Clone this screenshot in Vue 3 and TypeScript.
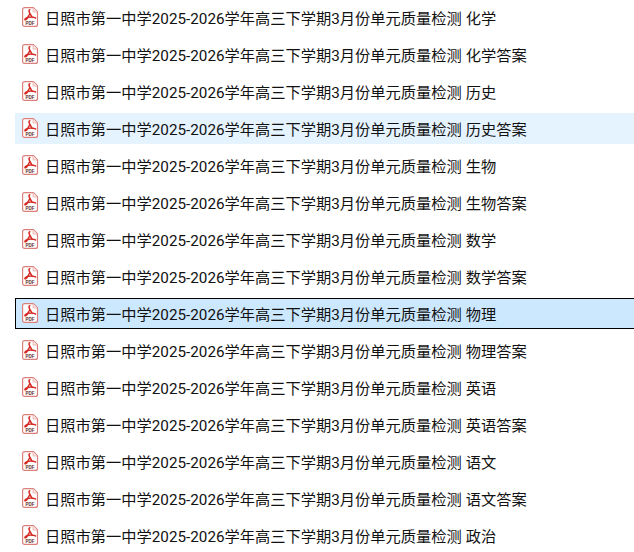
<template>
  <ul class="file-list">
    <li
      v-for="(file, i) in files"
      :key="i"
      class="file-row"
      :class="{ hover: i === 3, selected: i === 8 }"
    >
      <svg class="pdf-icon" width="18" height="20" viewBox="0 0 18 20">
        <path
          d="M2.600 .6h8.700l4.200 4.200v12.600a2 2 0 0 1-2 2H2.600a2 2 0 0 1-2-2V2.600a2 2 0 0 1 2-2z"
          fill="#fff"
          stroke="#dc7f7a"
          stroke-width="1.200"
        />
        <path d="M11.100 .8v4.200h4.200" fill="#fbe9e8" stroke="#e8aaa6" stroke-width=".8" />
        <path
          d="M7.800 2.800c-1.100 0-1 1.600.1 3.700l2.200 3.600c1.300.2 2.900.2 3.500.9M7.900 6.500 5.300 11.200c-1.100 1.400-2.100 1.900-2.400 1.500-.3-.5 1-1.600 2.700-2.200 1.900-.6 3.700-.6 4.800-.3"
          fill="none"
          stroke="#d62b25"
          stroke-width="1.500"
          stroke-linecap="round"
          stroke-linejoin="round"
        />
        <text x="8" y="17.800" class="pdf-label">PDF</text>
      </svg>
      <span class="file-name">{{ file }}</span>
    </li>
  </ul>
</template>

<script setup lang="ts">
const prefix = '日照市第一中学2025-2026学年高三下学期3月份单元质量检测'
const subjects = [
  '化学', '化学答案', '历史', '历史答案', '生物', '生物答案', '数学', '数学答案',
  '物理', '物理答案', '英语', '英语答案', '语文', '语文答案', '政治',
]
const files = subjects.map((s) => `${prefix} ${s}`)
</script>

<style scoped>
.file-list {
  list-style: none;
  margin: 0;
  padding: 2px 0 0 15px;
  display: flex;
  flex-direction: column;
  gap: 6px;
  height: 550px;
  overflow: hidden;
  font-family: Roboto, "Noto Sans CJK SC", sans-serif;
  font-size: 15.25px;
  color: #111;
}

.file-row {
  flex: none;
  height: 31px;
  box-sizing: border-box;
  display: flex;
  align-items: center;
  gap: 5px;
  padding-left: 6px;
  border: 1px solid transparent;
  margin-right: -2px;
}

.file-row.hover {
  background: #e5f3ff;
  border-color: #e5f3ff;
}

.file-row.selected {
  background: #cce8ff;
  border-color: #000;
}

.pdf-icon {
  flex: none;
  margin-top: -2px;
}

.pdf-label {
  font-family: "Liberation Sans", sans-serif;
  font-size: 4.500px;
  font-weight: 700;
  text-anchor: middle;
  fill: #5a2a28;
}

.file-name {
  white-space: nowrap;
  line-height: 20px;
  padding-top: 3px;
}
</style>

<style>
html, body {
  background: #fff;
  overflow: hidden;
}
</style>
